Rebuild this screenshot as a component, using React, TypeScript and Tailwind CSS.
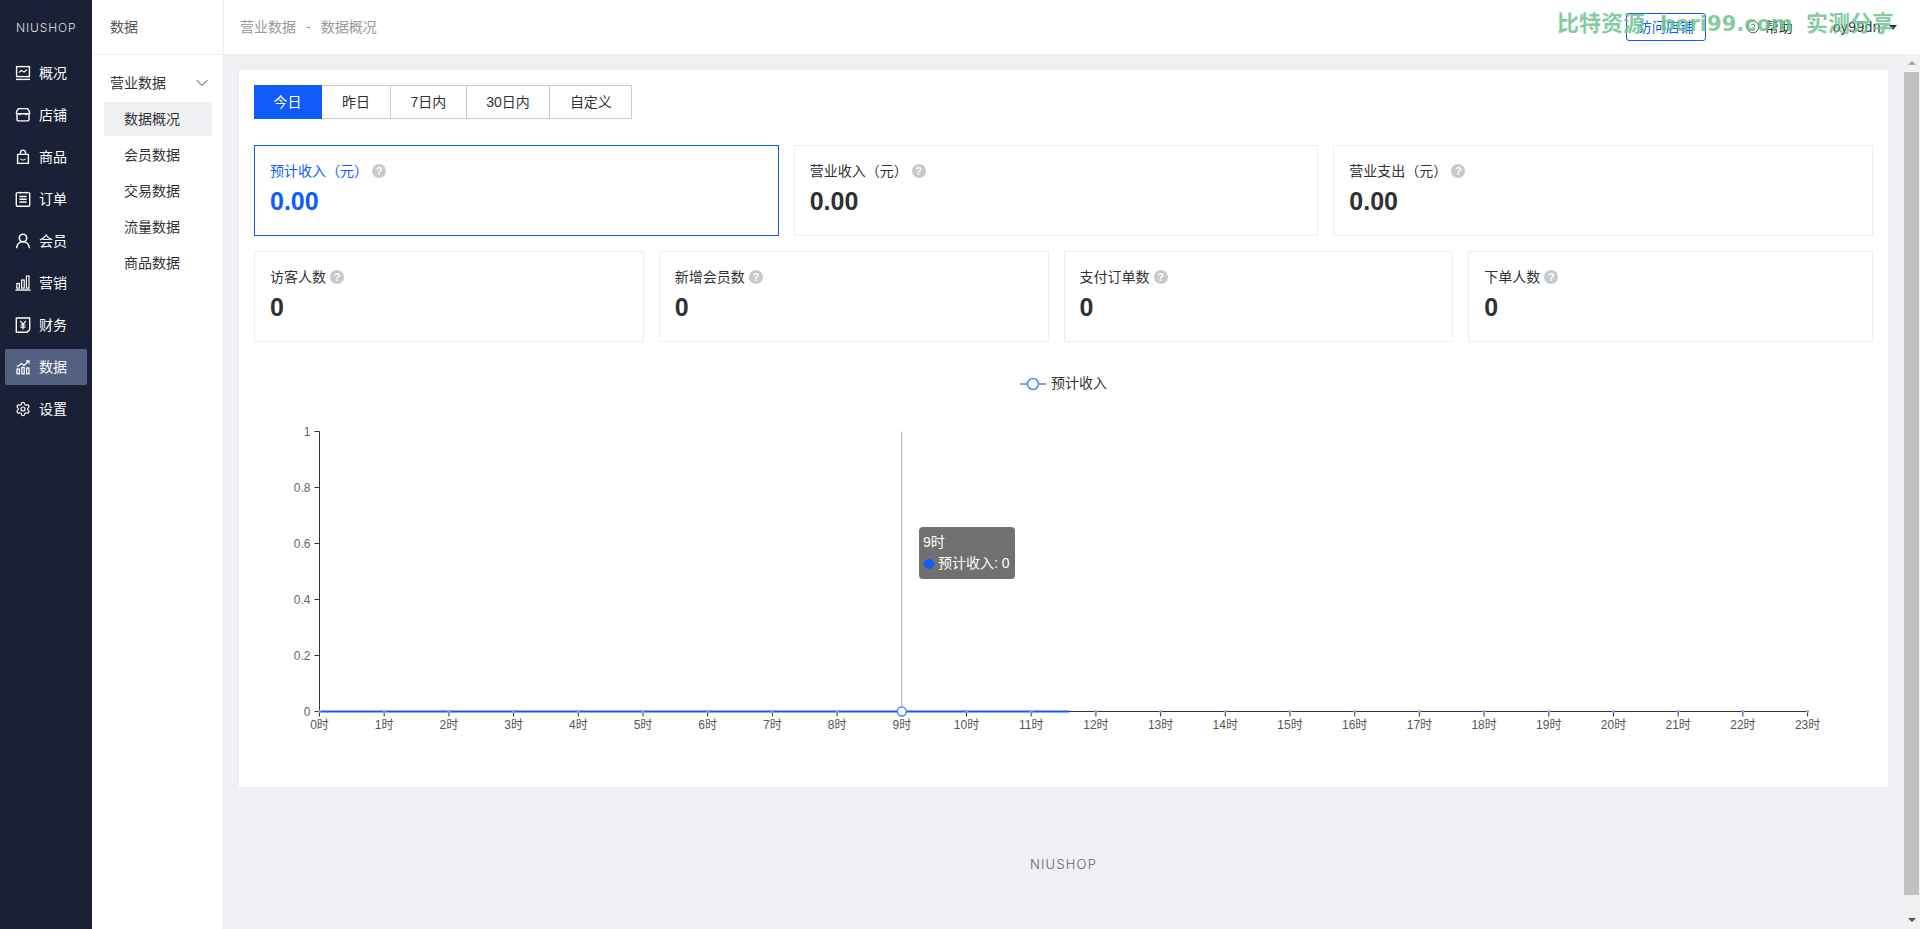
import { ChevronDown, CircleHelp, Settings } from 'lucide-react'
import type { ReactNode } from 'react'

function IconBox({ children }: { children: ReactNode }) {
  return (
    <svg width="16" height="16" viewBox="0 0 16 16" fill="none" stroke="currentColor" strokeWidth="1.4" className="shrink-0">
      {children}
    </svg>
  )
}

const menu: { label: string; active?: boolean; icon: ReactNode }[] = [
  {
    label: '概况',
    icon: (
      <IconBox>
        <rect x="1.600" y="1.600" width="12.800" height="10" />
        <path d="M4 7.500 6.200 5.500 9 7 12 4.800" strokeWidth="1.100" />
        <path d="M1 14.400h14" />
      </IconBox>
    ),
  },
  {
    label: '店铺',
    icon: (
      <IconBox>
        <path d="M3.500 1.600h9l2 3v2.200H1.500V4.600z" strokeLinejoin="round" />
        <path d="M2 6.800v5.600a1.500 1.500 0 0 0 1.500 1.500h9a1.500 1.500 0 0 0 1.500-1.500V6.800" />
        <path d="M5 6.800v1.500M11 6.800v1.500" />
      </IconBox>
    ),
  },
  {
    label: '商品',
    icon: (
      <IconBox>
        <path d="M2.600 5.400h10.800v9H2.600z" strokeLinejoin="round" />
        <path d="M5.500 5.200V3.600a2.500 2.500 0 0 1 5 0v1.600" />
        <path d="M5.400 9.600c.8 1.800 4.400 1.800 5.200 0" strokeWidth="1.100" />
      </IconBox>
    ),
  },
  {
    label: '订单',
    icon: (
      <IconBox>
        <rect x="1.300" y="1.600" width="13.400" height="13.700" rx="1.200" />
        <path d="M5 .8v1.800M11 .8v1.800" />
        <path d="M4.400 5.600h7.200M4.400 8.300h7.200M4.400 11h7.200" strokeWidth="1.500" />
      </IconBox>
    ),
  },
  {
    label: '会员',
    icon: (
      <IconBox>
        <circle cx="8" cy="5" r="3.700" strokeWidth="1.600" />
        <path d="M1.500 15.200c.3-3.800 3-6.400 6.500-6.400s6.200 2.600 6.500 6.400" strokeWidth="1.600" />
      </IconBox>
    ),
  },
  {
    label: '营销',
    icon: (
      <IconBox>
        <path d="M0.500 15h15" />
        <rect x="1.800" y="8.500" width="2.600" height="4.600" strokeWidth="1.200" />
        <rect x="6.600" y="5" width="2.600" height="8.100" strokeWidth="1.200" />
        <rect x="11.400" y="1" width="2.600" height="12.100" strokeWidth="1.200" />
      </IconBox>
    ),
  },
  {
    label: '财务',
    icon: (
      <IconBox>
        <path d="M1.300 1h13.400v11.500L12 15.300H1.300z" strokeLinejoin="round" />
        <path d="M5.200 4 8 7.400 10.800 4M8 7.400v5M5.500 8h5M5.500 10.200h5" strokeWidth="1.200" />
      </IconBox>
    ),
  },
  {
    label: '数据',
    active: true,
    icon: (
      <IconBox>
        <rect x="2" y="10" width="2.400" height="4.800" strokeWidth="1.200" />
        <rect x="6.800" y="8.500" width="2.400" height="6.300" strokeWidth="1.200" />
        <rect x="11.600" y="9" width="2.400" height="5.800" strokeWidth="1.200" />
        <path d="M2 7.800 6.500 4.600 9 6.400 13.400 2.200M11 1.800h3v3" strokeWidth="1.200" />
      </IconBox>
    ),
  },
  { label: '设置', icon: <Settings size={16} strokeWidth={1.8} className="shrink-0" /> },
]

const subMenu = ['数据概况', '会员数据', '交易数据', '流量数据', '商品数据']
const tabs = ['今日', '昨日', '7日内', '30日内', '自定义']
const topStats = ['预计收入（元）', '营业收入（元）', '营业支出（元）']
const bottomStats = ['访客人数', '新增会员数', '支付订单数', '下单人数']

function HelpDot() {
  return (
    <span className="ml-1 flex h-[14px] w-[14px] shrink-0 items-center justify-center rounded-full bg-[#c8c9cc] text-[11px] font-bold leading-none text-white">
      ?
    </span>
  )
}

function StatCard({ label, value, active, className }: { label: string; value: string; active?: boolean; className: string }) {
  return (
    <div className={`h-[91px] border px-[15px] pt-[15px] ${active ? 'border-[#105cfb]' : 'border-[#eeeeee]'} ${className}`}>
      <div className={`flex h-[20px] items-center text-[14px] ${active ? 'text-[#105cfb]' : 'text-[#333333]'}`}>
        <span>{label}</span>
        <HelpDot />
      </div>
      <div className={`mt-[3px] text-[25px] font-bold leading-[34px] ${active ? 'text-[#105cfb]' : 'text-[#303133]'}`}>{value}</div>
    </div>
  )
}

// chart coordinates are local to the svg, which starts at x=254 y=362 on the page
const axisLeft = 65.5
const axisBottom = 349.5
const axisTop = 69.5
const step = 64.7
const hours = Array.from({ length: 24 }, (_, i) => i)
const yLabels = ['0', '0.2', '0.4', '0.6', '0.8', '1']

function Chart() {
  const yStep = (axisBottom - axisTop) / 5
  const active = axisLeft + step * 9
  return (
    <div className="relative mt-[20px] h-[400px] w-full">
      <svg width="1619" height="400" viewBox="0 0 1619 400" className="block">
        <path d="M766 22h26" stroke="#7aa3fb" strokeWidth="2" />
        <circle cx="779" cy="22" r="5.500" fill="#fff" stroke="#4f86fb" strokeWidth="1.500" />
        <text x="797" y="26" fontSize="14" fill="#333">
          预计收入
        </text>

        <path d={`M${axisLeft} ${axisTop}V${axisBottom}`} stroke="#333" />
        <path d={`M${axisLeft} ${axisBottom}H${axisLeft + step * 23}`} stroke="#333" />
        {yLabels.map((label, i) => {
          const y = axisBottom - yStep * i
          return (
            <g key={label}>
              <path d={`M${axisLeft - 5} ${y}H${axisLeft}`} stroke="#333" />
              <text x={axisLeft - 9} y={y + 4} fontSize="12" fill="#666" textAnchor="end">
                {label}
              </text>
            </g>
          )
        })}
        {hours.map((h) => {
          const x = axisLeft + step * h
          return (
            <g key={h}>
              <path d={`M${x} ${axisBottom}v5`} stroke="#333" />
              <text x={x} y={axisBottom + 17} fontSize="12" fill="#555" textAnchor="middle">
                {h}时
              </text>
            </g>
          )
        })}
        <path d={`M${axisLeft} ${axisBottom}H815`} stroke="#105cfb" strokeWidth="2" />
        {hours.map((h) => (
          <circle key={h} cx={axisLeft + step * h} cy={axisBottom} r="1.500" fill="#7aa3fb" />
        ))}
        <path d={`M${active} ${axisTop}V${axisBottom}`} stroke="#aaaaaa" />
        <circle cx={active} cy={axisBottom} r="4.500" fill="#fff" stroke="#4f86fb" strokeWidth="1.500" />
      </svg>

      <div className="absolute left-[665px] top-[165px] h-[52px] w-[96px] rounded-[4px] bg-[#707070] px-[4px] text-[14px] leading-[21px] text-white">
        <div className="pt-[5px]">9时</div>
        <div className="flex items-center">
          <span className="mr-[4px] ml-[1px] h-[10px] w-[10px] rounded-full bg-[#105cfb]" />
          <span>预计收入: 0</span>
        </div>
      </div>
    </div>
  )
}

export default function App() {
  return (
    <div className="relative flex h-[929px] w-full overflow-hidden bg-white font-['Liberation_Sans','Noto_Sans_CJK_SC',sans-serif] text-[14px] text-[#333333]">
      <aside className="flex w-[92px] shrink-0 flex-col bg-[#1a2035] text-white">
        <div className="flex h-[55px] items-center pl-[16px] font-['Inter',sans-serif] text-[12px] font-light tracking-[0.9px] text-[#e0e0e0]">
          NIUSHOP
        </div>
        <nav className="flex flex-col gap-[6px] px-[5px]">
          {menu.map((item) => (
            <div
              key={item.label}
              className={`flex h-[36px] items-center gap-[8px] rounded-[2px] pl-[10px] ${item.active ? 'bg-[#536082]' : ''}`}
            >
              {item.icon}
              <span>{item.label}</span>
            </div>
          ))}
        </nav>
      </aside>

      <div className="w-[132px] shrink-0 border-r border-[#eeeeee]">
        <div className="flex h-[55px] items-center border-b border-[#eeeeee] pl-[18px] text-[#555555]">数据</div>
        <div className="mt-[10px] flex h-[36px] items-center justify-between pl-[18px] pr-[11px]">
          <span>营业数据</span>
          <ChevronDown size={20} strokeWidth={1.1} />
        </div>
        <div className="ml-[12px] mr-[11px] mt-[1px] flex flex-col gap-[2px]">
          {subMenu.map((label, i) => (
            <div key={label} className={`flex h-[34px] items-center pl-[20px] ${i === 0 ? 'bg-[#eef0f3]' : ''}`}>
              {label}
            </div>
          ))}
        </div>
      </div>

      <div className="flex min-w-0 flex-1 flex-col">
        <header className="flex h-[54px] shrink-0 items-center pl-[16px] pr-[23px]">
          <div className="flex items-center text-[#999999]">
            <span>营业数据</span>
            <span className="mx-[10px]">-</span>
            <span>数据概况</span>
          </div>
          <div className="ml-auto flex items-center">
            <div className="flex h-[28px] w-[80px] items-center justify-center rounded-[3px] border border-[#105cfb] text-[#105cfb]">访问店铺</div>
            <span className="ml-[19px] h-[14px] w-px bg-[#e5e5e5]" />
            <CircleHelp size={14} strokeWidth={1.25} className="ml-[20px]" />
            <span className="ml-[5px]">帮助</span>
            <span className="ml-[20px] h-[14px] w-px bg-[#e5e5e5]" />
            <span className="ml-[19px] tracking-[0.4px]">oy99dn</span>
            <span className="ml-[8px] h-0 w-0 border-x-[4.500px] border-t-[5px] border-x-transparent border-t-[#333333]" />
          </div>
        </header>

        <div className="flex min-h-0 flex-1">
          <main className="flex min-w-0 flex-1 flex-col bg-[#eef0f3] pl-[15px] pr-[15px] pt-[16px]">
            <section className="h-[717px] bg-white px-[15px] pt-[15px]">
              <div className="flex h-[34px] w-fit">
                {tabs.map((tab, i) => (
                  <div
                    key={tab}
                    className={`flex items-center border-y border-r ${
                      i === 0
                        ? 'border-[#105cfb] bg-[#105cfb] px-[19.500px] text-white'
                        : i === 1
                          ? 'border-[#cccccc] px-[20px]'
                          : 'border-[#cccccc] px-[19.500px]'
                    }`}
                  >
                    {tab}
                  </div>
                ))}
              </div>
              <div className="mt-[26px] flex">
                {topStats.map((label, i) => (
                  <StatCard key={label} label={label} value="0.00" active={i === 0} className={i === 2 ? 'flex-1' : 'mr-[15px] w-[524.67px]'} />
                ))}
              </div>
              <div className="mt-[15px] flex">
                {bottomStats.map((label, i) => (
                  <StatCard key={label} label={label} value="0" className={i === 3 ? 'flex-1' : 'mr-[15px] w-[389.75px]'} />
                ))}
              </div>
              <Chart />
            </section>
            <div className="flex flex-1 items-center justify-center pt-[14px] font-['Inter',sans-serif] text-[13px] font-light tracking-[1.2px] text-[#666666]">
              NIUSHOP
            </div>
          </main>

          <div className="flex w-[17px] shrink-0 flex-col bg-[#f1f1f1]">
            <div className="flex h-[18px] items-center justify-center">
              <span className="h-0 w-0 border-x-[4px] border-b-[4px] border-x-transparent border-b-[#a3a3a3]" />
            </div>
            <div className="mx-[1px] h-[823px] bg-[#c1c1c1]" />
            <div className="mt-auto flex h-[18px] items-center justify-center">
              <span className="h-0 w-0 border-x-[4px] border-t-[4px] border-x-transparent border-t-[#505050]" />
            </div>
          </div>
        </div>
      </div>

      <div className="absolute left-[1557px] top-[10px] flex items-center whitespace-nowrap text-[22px] font-bold leading-[28px] text-[#6fc28f]/85">
        <span>比特资源</span>
        <span className="ml-[15px] font-['DejaVu_Sans',sans-serif] text-[21px]">bori99.com</span>
        <span className="ml-[13px]">实测分享</span>
      </div>
    </div>
  )
}
